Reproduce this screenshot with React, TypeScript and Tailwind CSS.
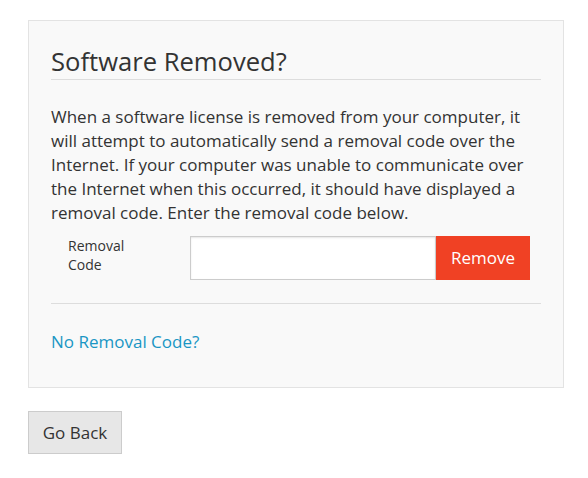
import React from 'react';

export default function App() {
  return (
    <div className="min-h-[478px] w-[588px] bg-white pl-[28px] pt-[20px] font-['Open_Sans',sans-serif] text-[#333]">
      <div className="w-[536px] border border-[#e3e3e3] bg-[#f9f9f9] px-[22px] pb-[33px] pt-[24px]">
        <h2 className="border-b border-[#dddddd] pb-[1px] text-[25.6px] leading-[33px] text-[#333]">
          Software Removed?
        </h2>
        <p className="mt-[25px] text-[17px] leading-[24px]">
          When a software license is removed from your computer, it will attempt to automatically send a
          removal code over the Internet. If your computer was unable to communicate over the Internet
          when this occurred, it should have displayed a removal code. Enter the removal code below.
        </p>
        <div className="mt-[11px] flex items-start">
          <label className="w-[139px] pl-[17px] text-[14px] leading-[19px]">
            Removal
            <br />
            Code
          </label>
          <input
            type="text"
            className="h-[44px] w-[246px] border border-[#cccccc] bg-white shadow-[inset_0_1px_2px_rgba(0,0,0,0.1)] outline-none"
          />
          <button className="h-[44px] w-[94px] bg-[#f04124] text-[17px] text-white">Remove</button>
        </div>
        <hr className="mt-[23px] border-t border-[#dddddd]" />
        <a href="#" className="mt-[26px] block text-[17px] leading-[24px] text-[#1a96c4]">
          No Removal Code?
        </a>
      </div>
      <button className="mt-[23px] h-[43px] w-[94px] border border-[#cccccc] bg-[#e7e7e7] text-[17px] text-[#333]">
        Go Back
      </button>
    </div>
  );
}
